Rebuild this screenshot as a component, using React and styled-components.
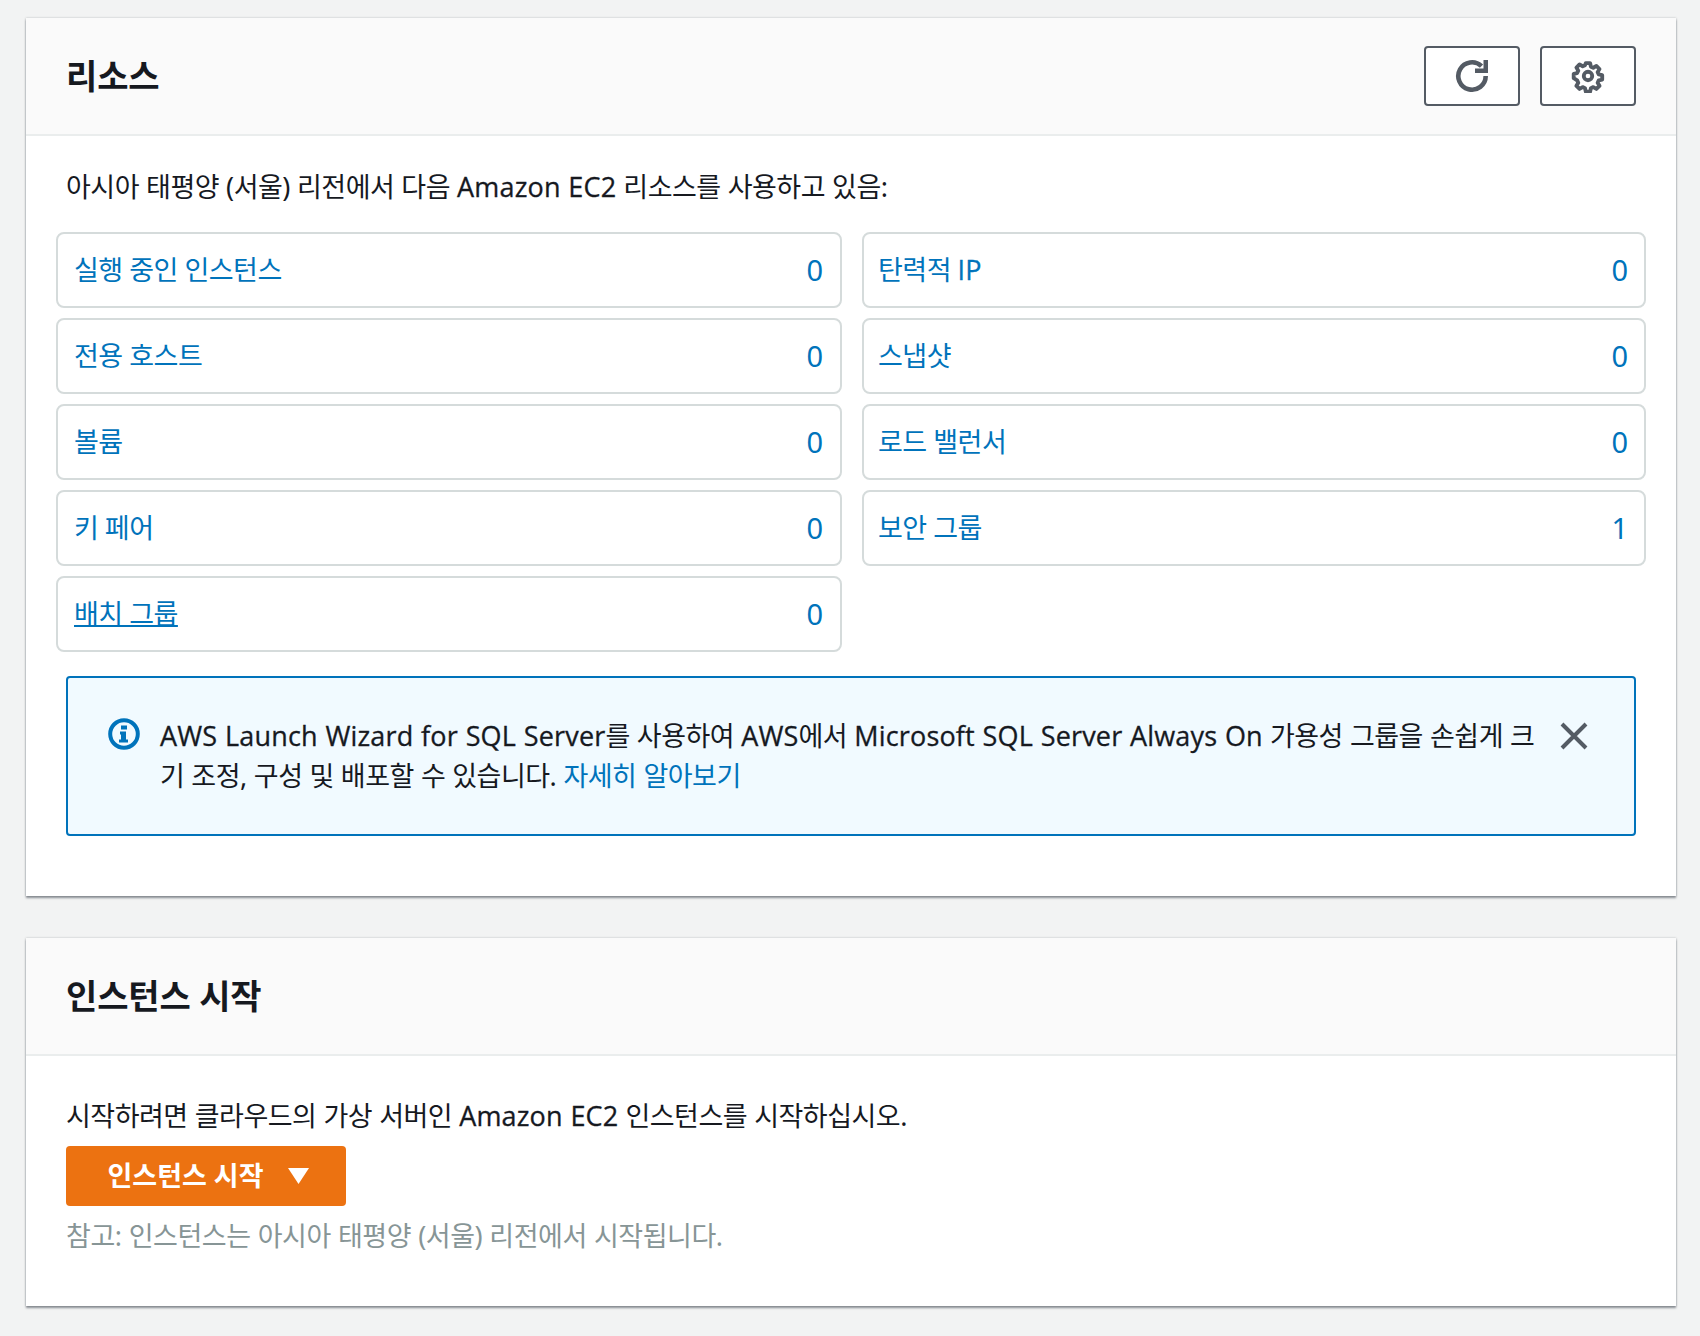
import React from 'react';
import styled, { createGlobalStyle } from 'styled-components';

const Global = createGlobalStyle`
  html, body { margin: 0; padding: 0; background: #f2f3f3; }
  body { font-family: "Noto Sans", "Noto Sans CJK KR", sans-serif; color: #16191f; }
  * { box-sizing: border-box; }
`;

const Page = styled.div`
  width: 1700px;
  height: 1336px;
  padding: 18px 24px 0 26px;
  display: flex;
  flex-direction: column;
  gap: 42px;
`;

const Card = styled.section`
  background: #fff;
  box-shadow: 0 2px 2px rgba(84, 91, 100, 0.65), 0 0 2px rgba(84, 91, 100, 0.35);
`;

const CardHeader = styled.header`
  height: 118px;
  background: #fafafa;
  border-bottom: 2px solid #eaeded;
  padding: 0 40px;
  display: flex;
  align-items: center;
  justify-content: space-between;
`;

const Title = styled.h2`
  margin: 0;
  font-size: 34px;
  line-height: 44px;
  font-weight: 700;
  letter-spacing: -0.15px;
  color: #16191f;
`;

const Actions = styled.div`
  display: flex;
  gap: 20px;
`;

const IconButton = styled.button`
  width: 96px;
  height: 60px;
  padding: 0;
  background: #fff;
  border: 2px solid #545b64;
  border-radius: 4px;
  color: #545b64;
  display: flex;
  align-items: center;
  justify-content: center;
`;

const ResourceBody = styled.div`
  padding: 31px 30px 60px;
`;

const Latin = styled.span`
  font-family: "Open Sans", "Noto Sans", sans-serif;
  letter-spacing: 0.17px;
  -webkit-text-stroke: 0.3px currentColor;
`;

const Intro = styled.p`
  margin: 0 0 25px 10px;
  font-size: 27px;
  line-height: 40px;
  letter-spacing: -0.5px;
  word-spacing: 0.5px;
`;

const Grid = styled.div`
  display: grid;
  grid-template-columns: 786px 784px;
  gap: 10px 20px;
`;

const Resource = styled.div`
  height: 76px;
  border: 2px solid #d5dbdb;
  border-radius: 8px;
  padding: 0 17px 0 16px;
  display: flex;
  align-items: center;
  justify-content: space-between;
  font-size: 27px;
  line-height: 40px;
  letter-spacing: -0.5px;
  color: #0073bb;

  &:nth-child(even) {
    padding: 0 16px 0 14px;
  }
`;

const ResourceName = styled.a`
  color: inherit;
  text-decoration: ${props => (props.$active ? 'underline' : 'none')};
  text-decoration-thickness: 2px;
`;

const Count = styled.span`
  font-size: 29px;
  letter-spacing: 0;
`;

const Alert = styled.div`
  margin: 24px 10px 0;
  height: 160px;
  background: #f1faff;
  border: 2px solid #0073bb;
  border-radius: 4px;
  padding: 38px 40px 0;
  display: flex;
  align-items: flex-start;
`;

const AlertIcon = styled.svg`
  flex: none;
  width: 32px;
  height: 32px;
  margin: 2px 20px 0 0;
`;

const AlertText = styled.div`
  flex: 1;
  font-size: 27px;
  line-height: 40px;
  letter-spacing: -0.5px;
  word-spacing: 0.5px;
  margin-right: 20px;
`;

const Link = styled.a`
  color: #0073bb;
`;

const CloseIcon = styled.svg`
  flex: none;
  width: 28px;
  height: 28px;
  margin: 6px 6px 0 0;
`;

const LaunchBody = styled.div`
  padding: 40px 40px 50px;
`;

const LaunchText = styled.p`
  margin: 0 0 10px;
  font-size: 27px;
  line-height: 40px;
  letter-spacing: -0.5px;
  word-spacing: 0.5px;
`;

const LaunchButton = styled.button`
  width: 280px;
  height: 60px;
  padding: 0 0 0 4px;
  background: #ec7211;
  border: 0;
  border-radius: 4px;
  color: #fff;
  font-family: inherit;
  font-size: 27px;
  line-height: 40px;
  font-weight: 700;
  letter-spacing: 0;
  display: flex;
  align-items: center;
  justify-content: center;
  gap: 24px;
`;

const Caret = styled.svg`
  width: 21px;
  height: 16px;
`;

const Note = styled.p`
  margin: 10px 0 0;
  font-size: 27px;
  line-height: 40px;
  letter-spacing: -0.45px;
  word-spacing: 0.5px;
  color: #879596;
`;

const resources = [
  { name: '실행 중인 인스턴스', count: 0 },
  { name: <>탄력적 <Latin>IP</Latin></>, count: 0 },
  { name: '전용 호스트', count: 0 },
  { name: '스냅샷', count: 0 },
  { name: '볼륨', count: 0 },
  { name: '로드 밸런서', count: 0 },
  { name: '키 페어', count: 0 },
  { name: '보안 그룹', count: 1 },
  { name: '배치 그룹', count: 0, active: true },
];

const App = () => (
  <Page>
    <Global />
    <Card>
      <CardHeader>
        <Title>리소스</Title>
        <Actions>
          <IconButton>
            <svg width="34" height="34" viewBox="0 0 34 34" fill="none">
              <path d="M30.7 17A13.7 13.7 0 1 1 26.5 7.1" stroke="currentColor" strokeWidth="4.6" />
              <path d="M33 1v13H20V9.5h8.5V1z" fill="currentColor" />
            </svg>
          </IconButton>
          <IconButton>
            <svg width="34" height="34" viewBox="0 0 16 16" fill="none" stroke="currentColor">
              <circle cx="8" cy="8" r="2" strokeWidth="1.8" />
              <path
                d="M6.8 1h2.4l.4 1.9 1.3.6 1.7-1 1.7 1.7-1 1.7.6 1.3 1.9.4v2.4l-1.9.4-.6 1.3 1 1.7-1.7 1.7-1.7-1-1.3.6-.4 1.9H6.8l-.4-1.9-1.3-.6-1.7 1-1.7-1.7 1-1.7-.6-1.3L.2 9.2V6.8l1.9-.4.6-1.3-1-1.7 1.7-1.7 1.7 1 1.3-.6z"
                strokeWidth="2.1"
                strokeLinejoin="round"
                transform="translate(1.1 1.1) scale(.86)"
              />
            </svg>
          </IconButton>
        </Actions>
      </CardHeader>
      <ResourceBody>
        <Intro>아시아 태평양 (서울) 리전에서 다음 <Latin>Amazon EC2</Latin> 리소스를 사용하고 있음:</Intro>
        <Grid>
          {resources.map((item, i) => (
            <Resource key={i}>
              <ResourceName $active={item.active}>{item.name}</ResourceName>
              <Count>{item.count}</Count>
            </Resource>
          ))}
        </Grid>
        <Alert>
          <AlertIcon viewBox="0 0 32 32">
            <circle cx="16" cy="16" r="13.8" fill="none" stroke="#0073bb" strokeWidth="4" />
            <path d="M13 7.5h6v4h-6zM12 13.5h6v8h2v3h-9v-3h2v-5h-1z" fill="#0073bb" />
          </AlertIcon>
          <AlertText>
            <Latin>AWS Launch Wizard for SQL Server</Latin>를 사용하여 <Latin>AWS</Latin>에서 <Latin>Microsoft SQL Server Always On</Latin> 가용성 그룹을 손쉽게 크기 조정, 구성 및 배포할 수 있습니다.{' '}
            <Link>자세히 알아보기</Link>
          </AlertText>
          <CloseIcon viewBox="0 0 28 28">
            <path d="M2 2l24 24M26 2L2 26" stroke="#545b64" strokeWidth="4" />
          </CloseIcon>
        </Alert>
      </ResourceBody>
    </Card>
    <Card>
      <CardHeader>
        <Title>인스턴스 시작</Title>
      </CardHeader>
      <LaunchBody>
        <LaunchText>시작하려면 클라우드의 가상 서버인 <Latin>Amazon EC2</Latin> 인스턴스를 시작하십시오.</LaunchText>
        <LaunchButton>
          인스턴스 시작
          <Caret viewBox="0 0 21 16">
            <path d="M0 0h21L10.5 16z" fill="#fff" />
          </Caret>
        </LaunchButton>
        <Note>참고: 인스턴스는 아시아 태평양 (서울) 리전에서 시작됩니다.</Note>
      </LaunchBody>
    </Card>
  </Page>
);

export default App;
